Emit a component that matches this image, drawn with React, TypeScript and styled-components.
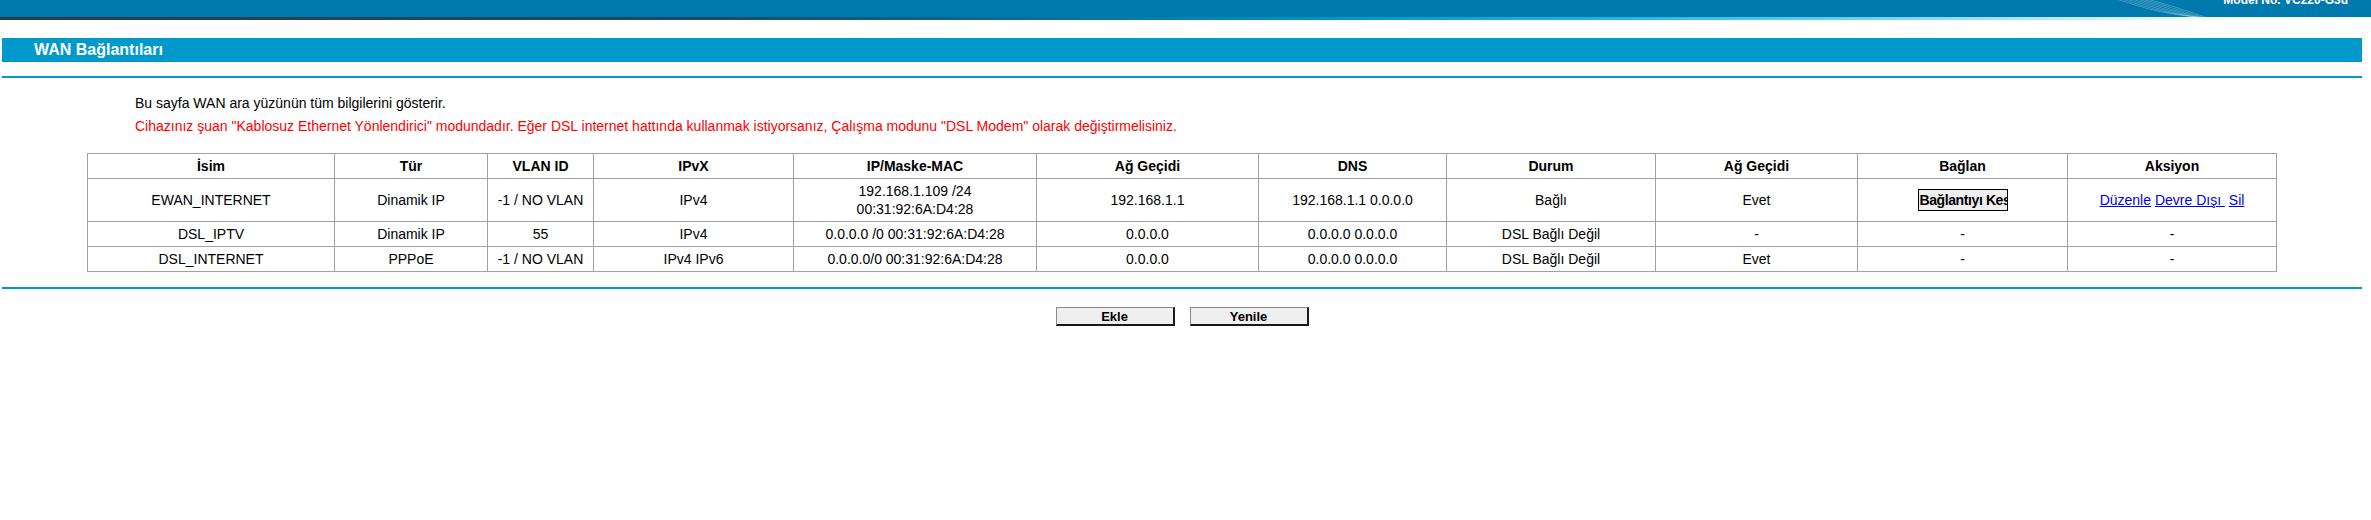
import React from "react";
import styled, { createGlobalStyle } from "styled-components";

const GlobalStyle = createGlobalStyle`
  html, body {
    margin: 0;
    padding: 0;
    background: #fff;
  }
  body {
    font-family: "Liberation Sans", Arial, sans-serif;
    color: #000;
  }
`;

const TopBanner = styled.div`
  height: 17px;
  background: #0079ad;
  display: flex;
  justify-content: flex-end;
  align-items: flex-start;
  padding-right: 23px;
  overflow: hidden;
`;

const Waves = styled.svg`
  flex: none;
  width: 114px;
  height: 17px;
`;

const ModelNo = styled.span`
  color: #fff;
  font-weight: bold;
  font-size: 12px;
  line-height: 12px;
  margin-top: -6px;
  white-space: nowrap;
`;

const Strip = styled.div`
  height: 3px;
  background: linear-gradient(
    to right,
    #2b3d4b 0%,
    #1c4b64 30%,
    #0b6a8f 42%,
    #039cc8 58%,
    #22b6df 68%,
    #66d0ec 78%,
    #c6eef9 88%,
    #ffffff 94%
  );
`;

const Page = styled.div`
  margin-left: 2px;
  width: 2360px;
`;

const TitleBar = styled.div`
  margin-top: 18px;
  height: 24px;
  background: #0099cc;
  color: #fff;
  font-weight: bold;
  font-size: 16px;
  line-height: 24px;
  padding-left: 32px;
`;

const Rule = styled.div<{ $top: number }>`
  margin-top: ${(p) => p.$top}px;
  height: 2px;
  background: #0099cc;
`;

const Intro = styled.div`
  margin-top: 17px;
  padding-left: 133px;
  display: flex;
  flex-direction: column;
  gap: 6px;
  font-size: 14px;
  line-height: 17px;
`;

const Note = styled.p<{ $warn?: boolean }>`
  margin: 0;
  color: ${(p) => (p.$warn ? "#ff0000" : "#000")};
`;

const Table = styled.table`
  margin: 18px 0 0 85px;
  width: 2189px;
  border-collapse: collapse;
  table-layout: fixed;
  font-size: 14px;
  line-height: 18px;
`;

const Th = styled.th`
  border: 1px solid #a0a0a0;
  padding: 3px;
  font-weight: bold;
  text-align: center;
`;

const Td = styled.td`
  border: 1px solid #a0a0a0;
  padding: 3px;
  text-align: center;
  vertical-align: middle;
`;

const CutButton = styled.button`
  width: 90px;
  height: 22px;
  padding: 0 0 0 1px;
  border: 1px solid #000;
  background: #efefef;
  font-family: "Liberation Sans", Arial, sans-serif;
  font-weight: bold;
  font-size: 14px;
  letter-spacing: -0.4px;
  line-height: 20px;
  text-align: left;
  white-space: nowrap;
  overflow: hidden;
  vertical-align: middle;
`;

const Link = styled.a`
  color: #0000ee;
  text-decoration: underline;
  cursor: pointer;
`;

const Actions = styled.div`
  display: flex;
  justify-content: center;
  gap: 15px;
  margin-top: 18px;
`;

const FormButton = styled.button`
  width: 119px;
  height: 19px;
  padding: 0;
  background: #efefef;
  border-style: solid;
  border-width: 1px 2px 2px 1px;
  border-color: #8a8a8a #1a1a1a #1a1a1a #8a8a8a;
  font-family: "Liberation Sans", Arial, sans-serif;
  font-weight: bold;
  font-size: 13px;
  line-height: 15px;
  color: #000;
`;

type Row = {
  name: string;
  type: string;
  vlan: string;
  ipvx: string;
  ip: string[];
  gw: string;
  dns: string;
  state: string;
  defGw: string;
  live: boolean;
};

const columns: [string, number][] = [
  ["İsim", 247],
  ["Tür", 153],
  ["VLAN ID", 106],
  ["IPvX", 200],
  ["IP/Maske-MAC", 243],
  ["Ağ Geçidi", 222],
  ["DNS", 188],
  ["Durum", 209],
  ["Ağ Geçidi", 202],
  ["Bağlan", 210],
  ["Aksiyon", 209],
];

const rows: Row[] = [
  {
    name: "EWAN_INTERNET",
    type: "Dinamik IP",
    vlan: "-1 / NO VLAN",
    ipvx: "IPv4",
    ip: ["192.168.1.109 /24", "00:31:92:6A:D4:28"],
    gw: "192.168.1.1",
    dns: "192.168.1.1 0.0.0.0",
    state: "Bağlı",
    defGw: "Evet",
    live: true,
  },
  {
    name: "DSL_IPTV",
    type: "Dinamik IP",
    vlan: "55",
    ipvx: "IPv4",
    ip: ["0.0.0.0 /0 00:31:92:6A:D4:28"],
    gw: "0.0.0.0",
    dns: "0.0.0.0 0.0.0.0",
    state: "DSL Bağlı Değil",
    defGw: "-",
    live: false,
  },
  {
    name: "DSL_INTERNET",
    type: "PPPoE",
    vlan: "-1 / NO VLAN",
    ipvx: "IPv4 IPv6",
    ip: ["0.0.0.0/0 00:31:92:6A:D4:28"],
    gw: "0.0.0.0",
    dns: "0.0.0.0 0.0.0.0",
    state: "DSL Bağlı Değil",
    defGw: "Evet",
    live: false,
  },
];

export default function App() {
  return (
    <>
      <GlobalStyle />
      <TopBanner>
        <Waves viewBox="0 0 114 17" fill="none">
          {[0, 1, 2, 3, 4, 5, 6].map((i) => (
            <path
              key={i}
              d={`M${4 + i * 5} -2 C ${30 + i * 6} 6, ${50 + i * 6} 14, ${90 + i * 4} ${17 + i}`}
              stroke="rgba(255,255,255,0.3)"
              strokeWidth="0.8"
            />
          ))}
        </Waves>
        <ModelNo>Model No. VC220-G3u</ModelNo>
      </TopBanner>
      <Strip />
      <Page>
        <TitleBar>WAN Bağlantıları</TitleBar>
        <Rule $top={14} />
        <Intro>
          <Note>Bu sayfa WAN ara yüzünün tüm bilgilerini gösterir.</Note>
          <Note $warn>
            Cihazınız şuan "Kablosuz Ethernet Yönlendirici" modundadır. Eğer DSL internet hattında
            kullanmak istiyorsanız, Çalışma modunu "DSL Modem" olarak değiştirmelisiniz.
          </Note>
        </Intro>
        <Table>
          <colgroup>
            {columns.map(([label, w], i) => (
              <col key={label + i} width={w} />
            ))}
          </colgroup>
          <thead>
            <tr>
              {columns.map(([label], i) => (
                <Th key={label + i}>{label}</Th>
              ))}
            </tr>
          </thead>
          <tbody>
            {rows.map((r) => (
              <tr key={r.name}>
                <Td>{r.name}</Td>
                <Td>{r.type}</Td>
                <Td>{r.vlan}</Td>
                <Td>{r.ipvx}</Td>
                <Td>
                  {r.ip.map((line) => (
                    <div key={line}>{line}</div>
                  ))}
                </Td>
                <Td>{r.gw}</Td>
                <Td>{r.dns}</Td>
                <Td>{r.state}</Td>
                <Td>{r.defGw}</Td>
                <Td>{r.live ? <CutButton>Bağlantıyı Kes</CutButton> : "-"}</Td>
                <Td>
                  {r.live ? (
                    <>
                      <Link>Düzenle</Link> <Link>{"Devre Dışı\u00a0"}</Link> <Link>Sil</Link>
                    </>
                  ) : (
                    "-"
                  )}
                </Td>
              </tr>
            ))}
          </tbody>
        </Table>
        <Rule $top={15} />
        <Actions>
          <FormButton>Ekle</FormButton>
          <FormButton>Yenile</FormButton>
        </Actions>
      </Page>
    </>
  );
}
